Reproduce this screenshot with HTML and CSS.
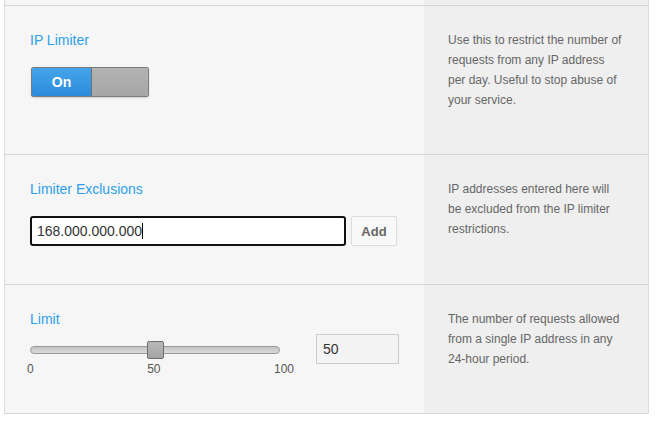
FILE: index.html
```html
<!DOCTYPE html>
<html lang="en">
<head>
    <meta charset="UTF-8">
    <meta name="viewport" content="width=device-width, initial-scale=1.0">
    <title>IP Limiter Settings</title>
    <link rel="stylesheet" href="styles.css">
</head>
<body>
    <div class="settings">
        <div class="row row-stub">
            <div class="field"></div>
            <div class="help"></div>
        </div>

        <div class="row row-limiter">
            <div class="field">
                <h2 class="field-title">IP Limiter</h2>
                <div class="toggle">
                    <span class="toggle-on">On</span>
                    <span class="toggle-knob"></span>
                </div>
            </div>
            <div class="help">
                <p>Use this to restrict the number of requests from any IP address per day. Useful to stop abuse of your service.</p>
            </div>
        </div>

        <div class="row row-exclusions">
            <div class="field">
                <h2 class="field-title">Limiter Exclusions</h2>
                <div class="add-row">
                    <div class="text-input">168.000.000.000<span class="caret"></span></div>
                    <button class="add-btn">Add</button>
                </div>
            </div>
            <div class="help">
                <p>IP addresses entered here will be excluded from the IP limiter restrictions.</p>
            </div>
        </div>

        <div class="row row-limit">
            <div class="field">
                <h2 class="field-title">Limit</h2>
                <div class="limit-row">
                    <div class="slider">
                        <div class="slider-control">
                            <div class="slider-track"></div>
                            <div class="slider-handle" style="left: 50%;"></div>
                        </div>
                        <div class="slider-labels">
                            <span>0</span>
                            <span>50</span>
                            <span>100</span>
                        </div>
                    </div>
                    <div class="number-box">50</div>
                </div>
            </div>
            <div class="help">
                <p>The number of requests allowed from a single IP address in any 24-hour period.</p>
            </div>
        </div>
    </div>
</body>
</html>
```

FILE: styles.css
```css
/* General */
body {
    margin: 0;
    background: #fff;
    font-family: "Liberation Sans", Arial, sans-serif;
    color: #333;
}

.settings {
    width: 643px;
    margin-left: 4px;
    border-left: 1px solid #dcdcdc;
    border-right: 1px solid #dcdcdc;
}

.row {
    display: grid;
    grid-template-columns: 419px 224px;
    border-bottom: 1px solid #d6d6d6;
}

.row-stub { height: 5px; }
.row-limiter { height: 148px; }
.row-exclusions { height: 129px; }
.row-limit { height: 128px; }

.field {
    background: #f6f6f6;
    padding: 24px 25px 0 25px;
}

.help {
    background: #efefef;
    padding: 24px 24px 0 24px;
}

.row-stub .field,
.row-stub .help {
    padding: 0;
}

.help p {
    margin: 0;
    font-size: 12px;
    line-height: 20px;
    color: #666;
}

.field-title {
    margin: 0;
    font-size: 14px;
    line-height: 20px;
    font-weight: normal;
    color: #2e9fea;
}

/* Toggle */
.toggle {
    display: flex;
    width: 116px;
    height: 28px;
    margin: 17px 0 0 1px;
    border: 1px solid #7c7c7c;
    border-radius: 2px;
    box-shadow: 0 1px 2px rgba(0, 0, 0, 0.15);
    overflow: hidden;
}

.toggle-on {
    width: 59px;
    background: linear-gradient(#44a5ea, #2b8bdb);
    color: #fff;
    font-weight: bold;
    font-size: 14px;
    line-height: 28px;
    text-align: center;
}

.toggle-knob {
    flex: 1;
    background: linear-gradient(#b3b3b3, #a6a6a6);
    border-left: 1px solid #707070;
}

/* Exclusions */
.add-row {
    display: flex;
    gap: 5px;
    margin-top: 17px;
}

.text-input {
    width: 302px;
    height: 26px;
    padding: 0 5px;
    background: #fff;
    border: 2px solid #111;
    border-radius: 3px;
    font-size: 14px;
    line-height: 26px;
    color: #333;
}

.caret {
    display: inline-block;
    width: 1px;
    height: 16px;
    background: #000;
    vertical-align: -3px;
}

.add-btn {
    width: 46px;
    height: 30px;
    padding: 0;
    background: #f8f8f8;
    border: 1px solid #dcdcdc;
    border-radius: 2px;
    font-family: inherit;
    font-size: 13px;
    font-weight: bold;
    color: #666;
}

/* Limit slider */
.limit-row {
    display: flex;
    align-items: flex-start;
    gap: 36px;
    margin-top: 5px;
}

.slider {
    width: 250px;
    padding-top: 7px;
}

.slider-control {
    position: relative;
    height: 18px;
}

.slider-track {
    position: absolute;
    left: 0;
    right: 0;
    top: 5px;
    height: 6px;
    background: linear-gradient(#c4c4c4, #dadada);
    border: 1px solid #9a9a9a;
    border-radius: 4px;
}

.slider-handle {
    position: absolute;
    top: 0;
    width: 15px;
    height: 16px;
    margin-left: -8px;
    background: linear-gradient(#b8b8b8, #a4a4a4);
    border: 1px solid #6e6e6e;
    border-radius: 2px;
}

.slider-labels {
    display: flex;
    justify-content: space-between;
    width: 267px;
    margin: 3px 0 0 -3px;
    font-size: 12px;
    line-height: 14px;
    color: #555;
}

.number-box {
    width: 75px;
    height: 28px;
    padding-left: 6px;
    background: #f3f3f3;
    border: 1px solid #cccccc;
    font-size: 14px;
    line-height: 28px;
    color: #333;
}
```
